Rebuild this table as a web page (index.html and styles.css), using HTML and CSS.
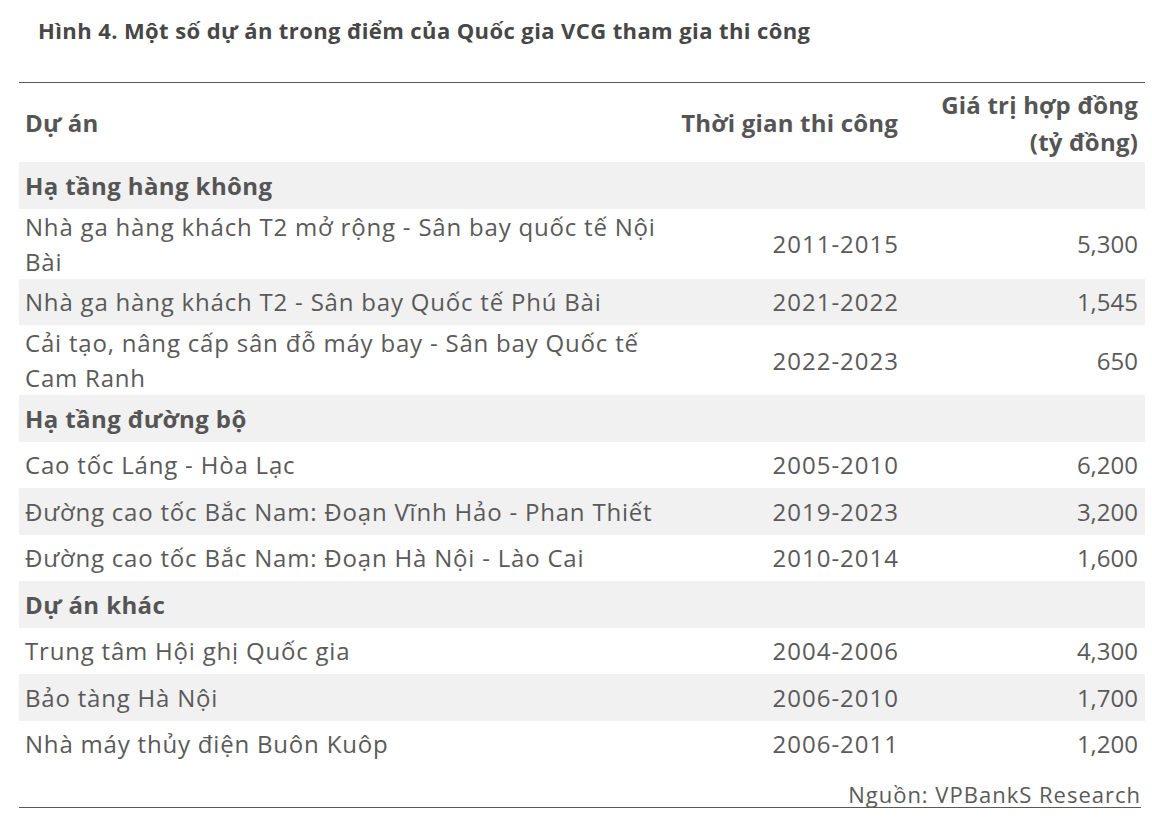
FILE: index.html
```html
<!DOCTYPE html>
<html lang="vi">
<head>
<meta charset="utf-8">
<title>Hình 4</title>
<link rel="stylesheet" href="styles.css">
</head>
<body>
<div class="figure">
  <h1 class="title">Hình 4. Một số dự án trong điểm của Quốc gia VCG tham gia thi công</h1>
  <table class="projects">
    <colgroup>
      <col class="c-name">
      <col class="c-time">
      <col class="c-value">
    </colgroup>
    <thead>
      <tr>
        <th class="name">Dự án</th>
        <th class="num">Thời gian thi công</th>
        <th class="num">Giá trị hợp đồng<br>(tỷ đồng)</th>
      </tr>
    </thead>
    <tbody>
      <tr class="group"><td colspan="3">Hạ tầng hàng không</td></tr>
      <tr><td>Nhà ga hàng khách T2 mở rộng - Sân bay quốc tế Nội Bài</td><td class="num year">2011-2015</td><td class="num">5,300</td></tr>
      <tr><td>Nhà ga hàng khách T2 - Sân bay Quốc tế Phú Bài</td><td class="num year">2021-2022</td><td class="num">1,545</td></tr>
      <tr><td>Cải tạo, nâng cấp sân đỗ máy bay - Sân bay Quốc tế Cam Ranh</td><td class="num year">2022-2023</td><td class="num">650</td></tr>
      <tr class="group"><td colspan="3">Hạ tầng đường bộ</td></tr>
      <tr><td>Cao tốc Láng - Hòa Lạc</td><td class="num year">2005-2010</td><td class="num">6,200</td></tr>
      <tr><td>Đường cao tốc Bắc Nam: Đoạn Vĩnh Hảo - Phan Thiết</td><td class="num year">2019-2023</td><td class="num">3,200</td></tr>
      <tr><td>Đường cao tốc Bắc Nam: Đoạn Hà Nội - Lào Cai</td><td class="num year">2010-2014</td><td class="num">1,600</td></tr>
      <tr class="group"><td colspan="3">Dự án khác</td></tr>
      <tr><td>Trung tâm Hội ghị Quốc gia</td><td class="num year">2004-2006</td><td class="num">4,300</td></tr>
      <tr><td>Bảo tàng Hà Nội</td><td class="num year">2006-2010</td><td class="num">1,700</td></tr>
      <tr><td>Nhà máy thủy điện Buôn Kuôp</td><td class="num year">2006-2011</td><td class="num">1,200</td></tr>
    </tbody>
  </table>
  <div class="source">Nguồn: VPBankS Research</div>
</div>
</body>
</html>
```

FILE: styles.css
```css
html, body {
  margin: 0;
  padding: 0;
  background: #ffffff;
}

body {
  font-family: "Open Sans", "Noto Sans", sans-serif;
  color: #5a5a5a;
}

.figure {
  width: 1126px;
  padding: 0 0 0 19px;
}

.title {
  margin: 0;
  padding: 16px 0 0 19px;
  height: 82px;
  box-sizing: border-box;
  font-size: 22px;
  font-weight: 700;
  letter-spacing: 0.4px;
  line-height: 28px;
  color: #474747;
}

.projects {
  width: 1126px;
  table-layout: fixed;
  border-collapse: collapse;
  border-top: 1.5px solid #5a5a5a;
  font-size: 24px;
  line-height: 35px;
  letter-spacing: 0.8px;
}

.c-name { width: 655px; }
.c-time { width: 231px; }
.c-value { width: 240px; }

.projects th {
  font-weight: 700;
  color: #555555;
  height: 79px;
  line-height: 37px;
  letter-spacing: 0.2px;
  white-space: nowrap;
  padding: 0 7px 0 6px;
  vertical-align: middle;
}

.projects th.name { text-align: left; }

.projects td {
  height: 46.5px;
  padding: 0 7px 0 6px;
  vertical-align: middle;
}

.projects td.num {
  text-align: right;
  letter-spacing: 0;
}

.projects td.year {
  letter-spacing: 1px;
  padding-right: 6px;
}

.projects th.num { text-align: right; }

.projects tbody tr:nth-child(odd) { background: #f1f1f1; }

.projects tr.group td {
  font-weight: 700;
  color: #555555;
  letter-spacing: 0.4px;
}

.source {
  width: 1122px;
  box-sizing: border-box;
  text-align: right;
  font-size: 22px;
  letter-spacing: 1px;
  line-height: 28px;
  padding: 13px 0 0;
  height: 41px;
  border-bottom: 1.5px solid #5a5a5a;
}
```
